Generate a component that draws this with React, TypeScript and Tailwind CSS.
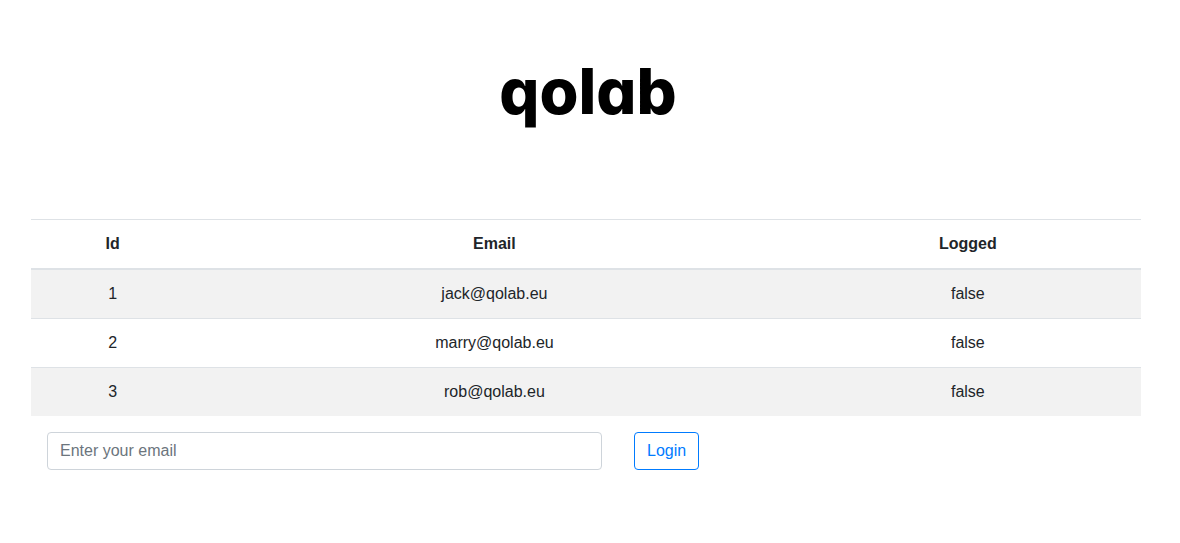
import { useState } from "react";

type User = { id: number; email: string; logged: boolean };

const users: User[] = [
  { id: 1, email: "jack@qolab.eu", logged: false },
  { id: 2, email: "marry@qolab.eu", logged: false },
  { id: 3, email: "rob@qolab.eu", logged: false },
];

function Logo() {
  return (
    <header className="flex h-[219px] justify-center pt-[53px] pl-1">
      <h1 className="font-['Inter',sans-serif] text-[63px] leading-[76px] font-extrabold text-black [font-feature-settings:'cv11']">
        qolab
      </h1>
    </header>
  );
}

function UserTable() {
  return (
    <table className="w-full table-fixed border-collapse text-center">
      <colgroup>
        <col className="w-[14.7%]" />
        <col className="w-[54.1%]" />
        <col className="w-[31.2%]" />
      </colgroup>
      <thead>
        <tr>
          {["Id", "Email", "Logged"].map((label) => (
            <th
              key={label}
              scope="col"
              className="border-t border-b-2 border-[#dee2e6] p-3 font-bold"
            >
              {label}
            </th>
          ))}
        </tr>
      </thead>
      <tbody>
        {users.map((user) => (
          <tr key={user.id} className="odd:bg-[#f2f2f2]">
            <td className="border-t border-[#dee2e6] p-3">{user.id}</td>
            <td className="border-t border-[#dee2e6] p-3">{user.email}</td>
            <td className="border-t border-[#dee2e6] p-3">{String(user.logged)}</td>
          </tr>
        ))}
      </tbody>
    </table>
  );
}

function LoginForm() {
  const [email, setEmail] = useState("");
  return (
    <form
      className="flex items-center gap-8 p-4"
      onSubmit={(event) => event.preventDefault()}
    >
      <input
        type="email"
        aria-label="Email"
        placeholder="Enter your email"
        value={email}
        onChange={(event) => setEmail(event.target.value)}
        className="h-[38px] w-[555px] min-w-0 rounded border border-[#ced4da] bg-white px-3 text-[#495057] placeholder:text-[#6c757d]"
      />
      <button
        type="submit"
        className="h-[38px] cursor-pointer rounded border border-[#007bff] px-3 text-[#007bff] hover:bg-[#007bff] hover:text-white"
      >
        Login
      </button>
    </form>
  );
}

export default function App() {
  return (
    <div className="min-h-screen bg-white pr-[39px] pl-[31px] font-['Liberation_Sans',Arial,sans-serif] text-base text-[#212529]">
      <main className="mx-auto max-w-[1110px]">
        <Logo />
        <UserTable />
        <LoginForm />
      </main>
    </div>
  );
}
